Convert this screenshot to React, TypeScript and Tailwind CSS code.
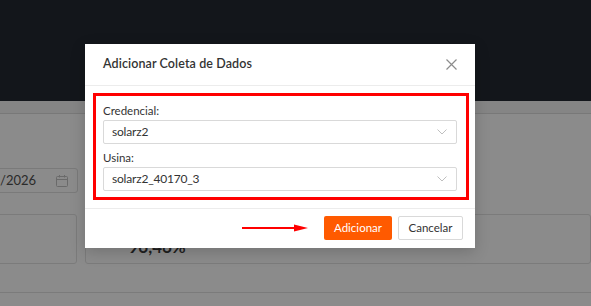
import React from "react";

function Chevron() {
  return (
    <svg width="10" height="6" viewBox="0 0 10 6" fill="none">
      <path d="M0.5 0.5 L5 5 L9.5 0.5" stroke="#bfbfbf" strokeWidth="1" />
    </svg>
  );
}

function Select({ value }: { value: string }) {
  return (
    <div className="h-[24px] border border-[#d9d9d9] rounded-[2px] flex items-center justify-between pl-[8px] pr-[9px] text-[12px] text-[#333]">
      <span className="tracking-[-0.2px]">{value}</span>
      <Chevron />
    </div>
  );
}

export default function App() {
  return (
    <div className="relative w-[591px] h-[306px] overflow-hidden bg-[#8b8b8b] font-['Lato',sans-serif]">
      <div className="h-[101px] bg-[#13161b]" />
      <div className="h-[13px] bg-[#858585] border-b border-[#787878]" />
      <div className="mt-[54px] ml-[-6px] w-[84px] h-[25px] border border-[#7a7a7a] rounded-[3px] flex items-center justify-between pl-[5px] pr-[9px] text-[13px] text-[#2a2a2a]">
        <span>/2026</span>
        <svg width="12" height="12" viewBox="0 0 12 12" fill="none" stroke="#6a6a6a" strokeWidth="1">
          <rect x="0.5" y="1.5" width="11" height="10" rx="1" />
          <path d="M0.5 4.5 H11.5 M3.5 0 V2.5 M8.5 0 V2.5" />
        </svg>
      </div>
      <div className="mt-[21px] flex gap-[8px] ml-[-6px]">
        <div className="w-[86px] h-[50px] border border-[#7b7b7b] rounded-[3px]" />
        <div className="w-[520px] h-[50px] border border-[#7b7b7b] rounded-[3px] pl-[42px] pt-[22px] text-[17px] font-bold text-[#1f1f1f] leading-[20px]">
          96,46%
        </div>
      </div>
      <div className="mt-[28px] border-t border-[#7b7b7b]" />

      <div className="absolute left-[85px] top-[44px] w-[390px] bg-white shadow-[0_4px_14px_rgba(0,0,0,0.18)]">
        <div className="h-[42px] px-[18px] flex items-center justify-between border-b border-[#ececec]">
          <span className="text-[12.5px] font-semibold text-[#333] tracking-[0.1px]">Adicionar Coleta de Dados</span>
          <svg width="11" height="11" viewBox="0 0 11 11" stroke="#8c8c8c" strokeWidth="1.2">
            <path d="M0.5 0.5 L10.5 10.5 M10.5 0.5 L0.5 10.5" />
          </svg>
        </div>
        <div className="pt-[7px] pb-[8px] pl-[8px] pr-[6px]">
          <div className="border-[3px] border-[#ff0000] pt-[6px] pb-[6px] pl-[7px] pr-[9px]">
            <div className="leading-[18px] text-[11.5px] text-[#333]">Credencial:</div>
            <Select value="solarz2" />
            <div className="mt-[5px] leading-[18px] text-[11.5px] text-[#333]">Usina:</div>
            <Select value="solarz2_40170_3" />
          </div>
        </div>
        <div className="border-t border-[#ececec] pt-[7px] pb-[8px] pr-[12px] flex items-center justify-end">
          <svg width="66" height="8" viewBox="0 0 66 8" className="mr-[16px]">
            <path d="M0 4 H54" stroke="#ff0000" strokeWidth="2" />
            <path d="M52 0.5 L66 4 L52 7.5 Z" fill="#ff0000" />
          </svg>
          <button className="h-[24px] w-[68px] bg-[#ff5a00] text-white text-[11.5px] rounded-[2px] flex items-center justify-center">
            Adicionar
          </button>
          <button className="ml-[6px] h-[24px] w-[65px] bg-white border border-[#d9d9d9] text-[#333] text-[11.5px] rounded-[2px] flex items-center justify-center">
            Cancelar
          </button>
        </div>
      </div>
    </div>
  );
}
